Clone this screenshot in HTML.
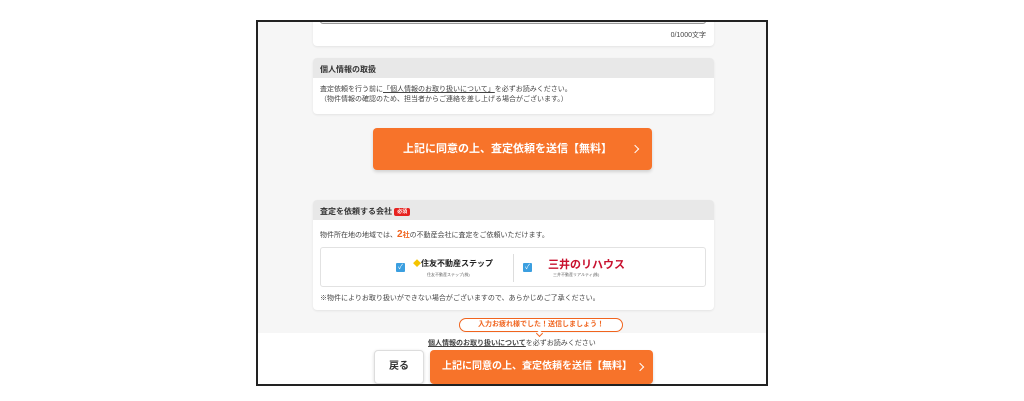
<!DOCTYPE html><html><head><meta charset="utf-8"><style>
*{box-sizing:border-box;margin:0;padding:0}
body{width:1024px;height:401px;background:#fff;font-family:"Liberation Sans","Noto Sans CJK JP",sans-serif;position:relative;overflow:hidden;color:#333}
.frame{position:absolute;left:256px;top:20px;width:512px;height:366px;border:2px solid #222;background:#f6f6f6;overflow:hidden}
.a{position:absolute}
.card{position:absolute;left:55px;width:401px;background:#fff;border-radius:4px;box-shadow:0 1px 2px rgba(0,0,0,.08)}
.hd{background:#e8e8e8;height:20px;font-size:8px;font-weight:bold;padding:6px 7px;border-radius:4px 4px 0 0;color:#333}
.sm{font-size:7px;color:#444}
.btn{position:absolute;background:#f7732a;color:#fff;font-weight:bold;border-radius:4px;box-shadow:0 2px 3px rgba(0,0,0,.15)}
.chev{position:absolute;top:50%;width:6px;height:6px;border-top:1.5px solid #fff;border-right:1.5px solid #fff;transform:translateY(-50%) rotate(45deg)}
.cb{position:absolute;width:9px;height:9px;background:#3b9fe0;border-radius:1px;color:#fff;font-size:7px;line-height:9px;text-align:center}
</style></head><body>
<div class="frame">
<div class="card" style="top:-10px;height:34px">
<div class="a" style="left:7px;top:8px;width:386px;height:4px;border:1px solid #999;border-top:none;border-radius:0 0 3px 3px;background:#eee"></div>
<div class="a sm" style="right:8px;top:18px">0/1000文字</div></div>
<div class="card" style="top:36px;height:56px">
<div class="hd">個人情報の取扱</div>
<div class="sm" style="padding:7px 7px 0;line-height:10px">査定依頼を行う前に<u>「個人情報のお取り扱いについて」</u>を必ずお読みください。<br>（物件情報の確認のため、担当者からご連絡を差し上げる場合がございます。）</div></div>
<div class="btn" style="left:115px;top:106px;width:279px;height:42px;font-size:11px;line-height:42px;padding-left:30px">上記に同意の上、査定依頼を送信【無料】<span class="chev" style="right:14px"></span></div>
<div class="card" style="top:178px;height:110px">
<div class="hd">査定を依頼する会社 <span style="background:#e6211f;color:#fff;font-size:5px;padding:1px 3px;border-radius:2px;vertical-align:1px">必須</span></div>
<div class="sm" style="position:absolute;left:7px;top:29px">物件所在地の地域では、<b style="color:#f0641e;font-size:10px">2</b><b style="color:#f0641e">社</b>の不動産会社に査定をご依頼いただけます。</div>
<div class="a" style="left:7px;top:47px;width:386px;height:40px;border:1px solid #e2e2e2;border-radius:3px">
<div class="cb" style="left:75px;top:15px">✓</div>
<div class="a" style="left:92px;top:10px;font-size:8px;font-weight:bold;color:#222"><span style="color:#f5c400">◆</span>住友不動産ステップ</div>
<div class="a" style="left:106px;top:24px;font-size:4px;color:#666">住友不動産ステップ(株)</div>
<div class="a" style="left:192px;top:6px;width:1px;height:28px;background:#ddd"></div>
<div class="cb" style="left:202px;top:15px">✓</div>
<div class="a" style="left:227px;top:8px;font-size:11px;font-weight:bold;color:#c8102e">三井のリハウス</div>
<div class="a" style="left:232px;top:24px;font-size:4px;color:#666">三井不動産リアルティ(株)</div></div>
<div class="a sm" style="left:7px;top:93px">※物件によりお取り扱いができない場合がございますので、あらかじめご了承ください。</div></div>
<div class="a" style="left:0;top:311px;width:512px;height:60px;background:#fff"></div>
<div class="a" style="left:201px;top:296px;width:164px;height:14px;border:1px solid #f0641e;border-radius:8px;background:#fff;color:#f0641e;font-size:7px;font-weight:bold;text-align:center;line-height:12px">入力お疲れ様でした！送信しましょう！</div>
<div class="a" style="left:279px;top:309px;width:5px;height:5px;background:#fff;border-right:1px solid #f0641e;border-bottom:1px solid #f0641e;transform:rotate(45deg)"></div>
<div class="a sm" style="left:170px;top:316px;font-size:7px"><b><u>個人情報のお取り扱いについて</u></b>を必ずお読みください</div>
<div class="a" style="left:116px;top:328px;width:50px;height:34px;background:#fff;border:1px solid #ddd;border-radius:4px;box-shadow:0 1px 3px rgba(0,0,0,.15);font-size:10px;font-weight:bold;text-align:center;line-height:32px">戻る</div>
<div class="btn" style="left:172px;top:328px;width:223px;height:34px;font-size:10px;line-height:34px;padding-left:12px">上記に同意の上、査定依頼を送信【無料】<span class="chev" style="right:10px"></span></div>
</div>
</body></html>
